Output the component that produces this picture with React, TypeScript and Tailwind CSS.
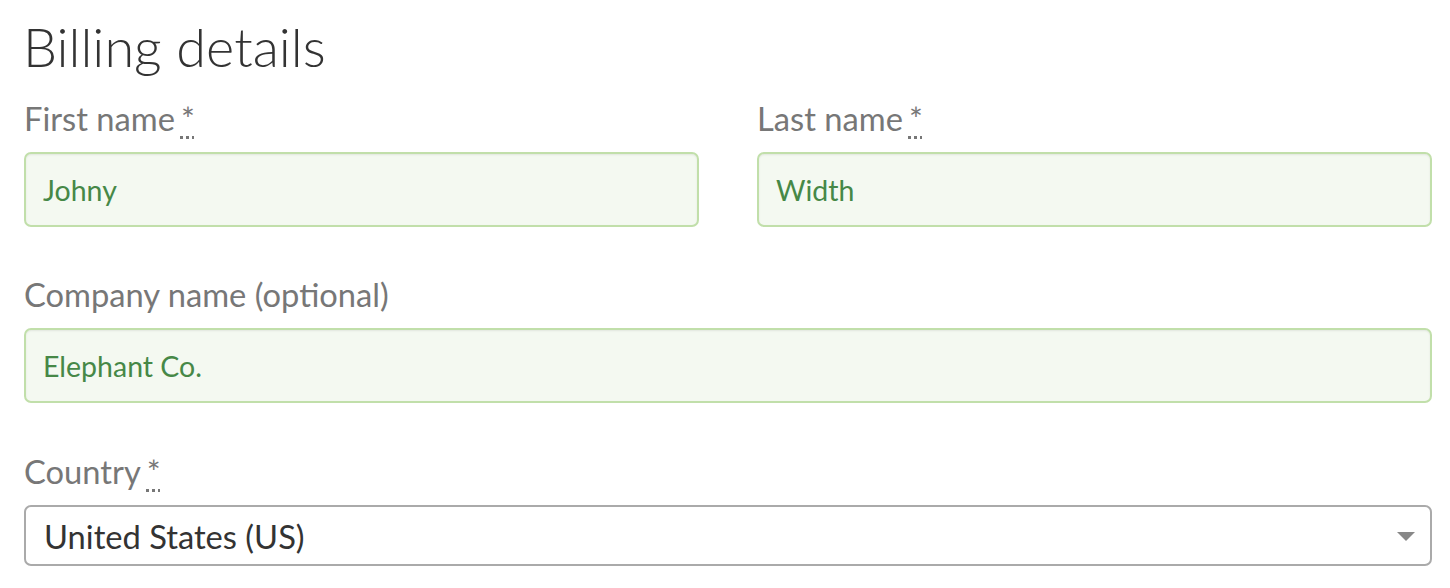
import React from 'react';

const Req = () => (
    <abbr title="required" className="ml-[6px] text-[#777] underline decoration-dotted decoration-[3px] underline-offset-[5px]">
        *
    </abbr>
);

const Label = ({ text, required }: { text: string; required?: boolean }) => (
    <label className="block text-[32.7px] leading-[36px] text-[#777] mb-[15px]">
        {text}
        {required && <Req />}
    </label>
);

const TextInput = ({ value }: { value: string }) => (
    <input
        readOnly
        value={value}
        className="block w-full h-[75px] px-[17px] rounded-[7px] border-2 border-[#c1dfaa] bg-[#f4f9f1] text-[#468847] text-[28.5px] shadow-[inset_0_1px_2px_rgba(0,0,0,0.08)] outline-none"
    />
);

export default function App() {
    return (
        <div className="min-h-[588px] bg-white pl-[24px] pr-[18px] pt-[14px] font-['Lato',sans-serif]">
            {/* Heading */}
            <h3 className="text-[54px] leading-[65px] font-light text-[#333] -ml-[1px]">Billing details</h3>

            <div className="mt-[22px] grid grid-cols-2 gap-x-[58px]">
                <div className="mb-[50px]">
                    <Label text="First name" required />
                    <TextInput value="Johny" />
                </div>
                <div className="mb-[50px]">
                    <Label text="Last name" required />
                    <TextInput value="Width" />
                </div>
            </div>

            <div className="mb-[51px]">
                <Label text="Company name (optional)" />
                <TextInput value="Elephant Co." />
            </div>

            <div>
                <Label text="Country" required />
                <div className="relative h-[61px] rounded-[7px] border-2 border-[#aaa] bg-white flex items-center pl-[18px] pt-[3px]">
                    <span className="text-[32.7px] text-[#333]">United States (US)</span>
                    <span className="absolute right-[15px] top-[25px] w-0 h-0 border-l-[9px] border-r-[9px] border-t-[9px] border-l-transparent border-r-transparent border-t-[#888]" />
                </div>
            </div>
        </div>
    );
}
